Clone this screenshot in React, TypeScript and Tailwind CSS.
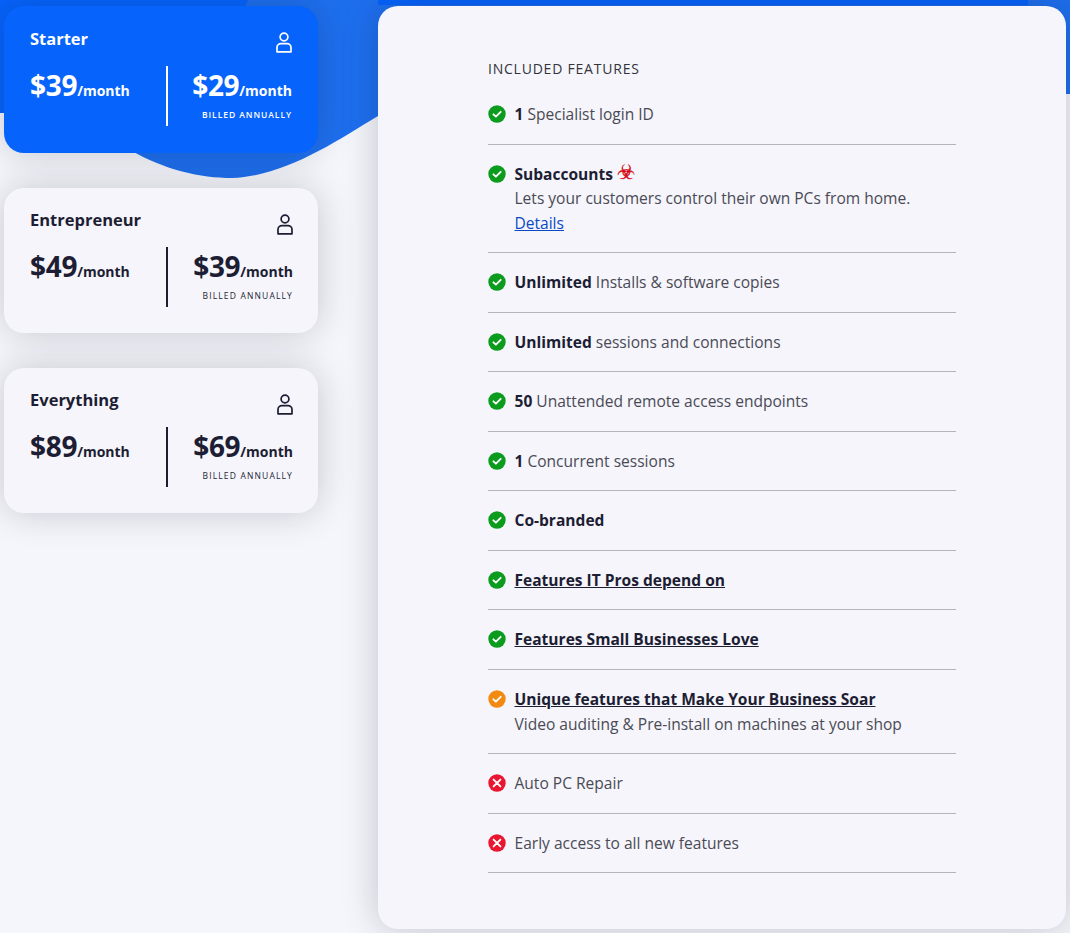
import React from "react";

const font = { fontFamily: '"Open Sans", sans-serif' };

function UserIcon({ color }: { color: string }) {
  return (
    <svg width="16" height="21" viewBox="0 0 16 21" fill="none" stroke={color} strokeWidth="1.7">
      <circle cx="8" cy="5" r="3.9" />
      <path d="M1 19.8V15.5C1 13 3 11.6 5 11.6H11C13 11.6 15 13 15 15.5V19.8Z" strokeLinejoin="round" />
    </svg>
  );
}

function Card({ name, a, b, active }: { name: string; a: string; b: string; active?: boolean }) {
  const text = active ? "text-white" : "text-[#1d1d33]";
  return (
    <div
      className={`rounded-[20px] pl-[26px] ${text} ${
        active
          ? "h-[147px] pt-[21.5px] pr-[26px] mb-[0.5px] bg-[#0663fb] shadow-[0_0_36px_rgba(20,20,40,0.2)]"
          : "h-[145px] pt-[20px] pr-[25px] bg-[#f5f5fb] shadow-[0_0_36px_rgba(20,20,40,0.2)]"
      }`}
    >
      <div className={`flex justify-between items-start ${active ? "h-[39px]" : "h-[38.5px]"}`}>
        <span className="text-[16.5px] leading-[24px] font-bold">{name}</span>
        <span className={active ? "mt-[5px]" : "mt-[6px]"}>
          <UserIcon color={active ? "#ffffff" : "#1d1d33"} />
        </span>
      </div>
      <div className="flex">
        <div className="w-[136px] h-[60px] flex items-baseline">
          <span className="text-[28px] leading-[38px] font-bold tracking-[-0.3px]">{a}</span>
          <span className="text-[14px] font-bold">/month</span>
        </div>
        <div className={`w-[2px] h-[60px] ${active ? "bg-white" : "bg-[#1d1d33]"}`} />
        <div className="flex-1 text-right">
          <div className="flex items-baseline justify-end">
            <span className="text-[28px] leading-[38px] font-bold tracking-[-0.3px]">{b}</span>
            <span className="text-[14px] font-bold">/month</span>
          </div>
          <div className={`text-[8.5px] leading-[12px] mt-[5px] ${active ? "font-semibold tracking-[0.95px]" : "tracking-[1.15px]"}`}>
            BILLED ANNUALLY
          </div>
        </div>
      </div>
    </div>
  );
}

function Status({ kind }: { kind: "ok" | "warn" | "no" }) {
  const fill = kind === "ok" ? "#0b9c1e" : kind === "warn" ? "#f28a12" : "#ea1530";
  return (
    <svg width="18" height="18" viewBox="0 0 18 18" className="shrink-0 mt-[3px]">
      <circle cx="9" cy="9" r="8.7" fill={fill} />
      {kind === "no" ? (
        <path d="M5.6 5.6L12.4 12.4M12.4 5.6L5.6 12.4" stroke="#fff" strokeWidth="1.9" strokeLinecap="round" />
      ) : (
        <path d="M5.4 9.3L7.9 11.7L12.7 6.8" fill="none" stroke="#fff" strokeWidth="1.8" strokeLinecap="round" strokeLinejoin="round" />
      )}
    </svg>
  );
}

function Row({ kind, children }: { kind: "ok" | "warn" | "no"; children: React.ReactNode }) {
  return (
    <div className="flex gap-[8.5px] pt-[17px] pb-[17px] border-b border-[#b5b5b8] text-[15.55px] leading-[24.55px] text-[#4a4a55]">
      <Status kind={kind} />
      <div>{children}</div>
    </div>
  );
}

const B = ({ children }: { children: React.ReactNode }) => (
  <b className="font-bold text-[#1d1d33]">{children}</b>
);
const U = ({ children }: { children: React.ReactNode }) => (
  <b className="font-bold text-[#1d1d33] underline">{children}</b>
);

export default function App() {
  return (
    <div style={font} className="relative w-[1070px] h-[933px] overflow-hidden bg-[#f5f6fb]">
      <svg className="absolute left-0 top-0" width="1070" height="200" viewBox="0 0 1070 200">
        <path d="M0 0H1070V94H378V116C335 142 285 176 232 178C200 178 165 170 130 150H100V113H0Z" fill="#1e6fee" />
        <path d="M0 0H248L200 113H0Z" fill="#0663fb" />
        <rect x="378" width="650" height="5" fill="#0663fb" />
      </svg>
      <div className="relative flex pt-[5.5px] pl-[4px]">
        <div className="w-[314px] flex flex-col gap-[35px]">
          <Card name="Starter" a="$39" b="$29" active />
          <Card name="Entrepreneur" a="$49" b="$39" />
          <Card name="Everything" a="$89" b="$69" />
        </div>
        <div className="ml-[60px] w-[688px] h-[923px] rounded-[20px] bg-[#f5f5fb] pl-[110px] pr-[110px] pt-[53px] shadow-[0_0_36px_rgba(20,20,40,0.22)]">
          <div className="text-[14px] leading-[20px] tracking-[0.78px] text-[#33333a] font-medium mb-[6.5px]">
            INCLUDED FEATURES
          </div>
          <Row kind="ok"><B>1</B> Specialist login ID</Row>
          <Row kind="ok">
            <B>Subaccounts</B>{" "}
            <span
              style={{ fontFamily: '"DejaVu Sans", sans-serif' }}
              className="text-[#d40b16] text-[20px] leading-[10px] relative top-[-1px] [-webkit-text-stroke:0.4px_#d40b16]"
            >
              ☣
            </span>
            <br />
            Lets your customers control their own PCs from home.
            <br />
            <a className="text-[#0b49c4] underline">Details</a>
          </Row>
          <Row kind="ok"><B>Unlimited</B> Installs &amp; software copies</Row>
          <Row kind="ok"><B>Unlimited</B> sessions and connections</Row>
          <Row kind="ok"><B>50</B> Unattended remote access endpoints</Row>
          <Row kind="ok"><B>1</B> Concurrent sessions</Row>
          <Row kind="ok"><B>Co-branded</B></Row>
          <Row kind="ok"><U>Features IT Pros depend on</U></Row>
          <Row kind="ok"><U>Features Small Businesses Love</U></Row>
          <Row kind="warn">
            <U>Unique features that Make Your Business Soar</U>
            <br />
            Video auditing &amp; Pre-install on machines at your shop
          </Row>
          <Row kind="no">Auto PC Repair</Row>
          <Row kind="no">Early access to all new features</Row>
        </div>
      </div>
    </div>
  );
}
